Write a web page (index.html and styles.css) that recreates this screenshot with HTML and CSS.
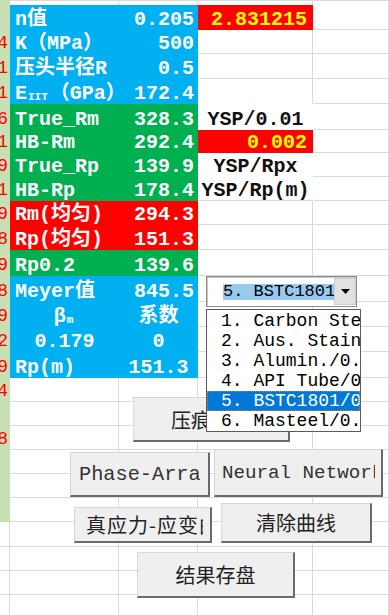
FILE: index.html
```html
<!DOCTYPE html>
<html lang="zh">

<head>
    <meta charset="UTF-8">
    <title>压痕计算</title>
    <meta name="viewport" content="width=device-width, initial-scale=1.0">
    <link rel="stylesheet" href="styles.css">
</head>

<body>

    <div class="sheet">
        <div class="grid">
            <!-- row 0 (cut off at the top) -->
            <div class="c a"></div><div class="c t"></div><div class="c t"></div><div class="c t"></div><div class="c t"></div>

            <!-- input block -->
            <div class="c a"></div>
            <div class="c bl">n值</div>
            <div class="c bl num">0.205</div>
            <div class="c rd num yel">2.831215</div>
            <div class="c"></div>

            <div class="c a"><span>0.284</span></div>
            <div class="c bl">K（MPa）</div>
            <div class="c bl num">500</div>
            <div class="c"></div>
            <div class="c"></div>

            <div class="c a"><span>0.651</span></div>
            <div class="c bl">压头半径R</div>
            <div class="c bl num">0.5</div>
            <div class="c"></div>
            <div class="c"></div>

            <div class="c a"><span>0.311</span></div>
            <div class="c bl">E<span class="s">IIT</span>（GPa）</div>
            <div class="c bl num">172.4</div>
            <div class="c nb"></div>
            <div class="c"></div>

            <!-- results -->
            <div class="c a"><span>0.146</span></div>
            <div class="c gr">True_Rm</div>
            <div class="c gr num">328.3</div>
            <div class="c dk nr nb">YSP/0.01</div>
            <div class="c"></div>

            <div class="c a"><span>0.271</span></div>
            <div class="c gr">HB-Rm</div>
            <div class="c gr num">292.4</div>
            <div class="c rd num yel">0.002</div>
            <div class="c"></div>

            <div class="c a"><span>0.539</span></div>
            <div class="c gr">True_Rp</div>
            <div class="c gr num">139.9</div>
            <div class="c dk nr nb">YSP/Rpx</div>
            <div class="c"></div>

            <div class="c a"><span>0.421</span></div>
            <div class="c gr">HB-Rp</div>
            <div class="c gr num">178.4</div>
            <div class="c dk nr">YSP/Rp(m)</div>
            <div class="c"></div>

            <div class="c a"><span>0.779</span></div>
            <div class="c rd">Rm(均匀)</div>
            <div class="c rd num">294.3</div>
            <div class="c"></div>
            <div class="c"></div>

            <div class="c a"><span>0.348</span></div>
            <div class="c rd">Rp(均匀)</div>
            <div class="c rd num">151.3</div>
            <div class="c"></div>
            <div class="c"></div>

            <div class="c a"><span>0.519</span></div>
            <div class="c gr">Rp0.2</div>
            <div class="c gr num">139.6</div>
            <div class="c"></div>
            <div class="c"></div>

            <div class="c a"><span>0.368</span></div>
            <div class="c bl">Meyer值</div>
            <div class="c bl num">845.5</div>
            <div class="c"></div>
            <div class="c"></div>

            <div class="c a"><span>0.129</span></div>
            <div class="c bl mid">β<span class="s">m</span></div>
            <div class="c bl mid">系数</div>
            <div class="c"></div>
            <div class="c"></div>

            <div class="c a"><span>0.412</span></div>
            <div class="c bl mid">0.179</div>
            <div class="c bl mid">0</div>
            <div class="c"></div>
            <div class="c"></div>

            <div class="c a"><span>0.659</span></div>
            <div class="c bl">Rp(m)</div>
            <div class="c bl mid">151.3</div>
            <div class="c"></div>
            <div class="c"></div>

            <!-- empty rows -->
            <div class="c a"><span>0.274</span></div><div class="c"></div><div class="c"></div><div class="c"></div><div class="c"></div>
            <div class="c a"></div><div class="c"></div><div class="c"></div><div class="c"></div><div class="c"></div>
            <div class="c a"><span>0.608</span></div><div class="c"></div><div class="c"></div><div class="c"></div><div class="c"></div>
            <div class="c a"></div><div class="c"></div><div class="c"></div><div class="c"></div><div class="c"></div>
            <div class="c a"></div><div class="c"></div><div class="c"></div><div class="c"></div><div class="c"></div>
            <div class="c a"></div><div class="c"></div><div class="c"></div><div class="c"></div><div class="c"></div>
            <div class="c"></div><div class="c"></div><div class="c"></div><div class="c"></div><div class="c"></div>
            <div class="c"></div><div class="c"></div><div class="c"></div><div class="c"></div><div class="c"></div>
            <div class="c"></div><div class="c"></div><div class="c"></div><div class="c"></div><div class="c"></div>
            <div class="c"></div><div class="c"></div><div class="c"></div><div class="c"></div><div class="c"></div>
        </div>

        <!-- controls floating on the sheet -->
        <button class="btn btn-yh">压痕曲线</button>
        <button class="btn en btn-phase"><span class="clip">Phase-Array</span></button>
        <button class="btn en btn-neural"><span class="clip">Neural Network</span></button>
        <button class="btn left btn-zyl"><span class="clip">真应力-应变曲线</span></button>
        <button class="btn btn-clear">清除曲线</button>
        <button class="btn btn-save">结果存盘</button>

        <div class="combo">
            <span class="combo-text">5. BSTC1801/0.2</span>
            <div class="arrow">
                <svg width="9" height="5" viewBox="0 0 9 5"><polygon points="0,0 9,0 4.5,5" fill="#000"/></svg>
            </div>
        </div>

        <ul class="list">
            <li>1. Carbon Steel/0.2</li>
            <li>2. Aus. Stainless/0.2</li>
            <li>3. Alumin./0.2</li>
            <li>4. API Tube/0.2</li>
            <li class="sel">5. BSTC1801/0.2</li>
            <li>6. Masteel/0.2</li>
        </ul>
    </div>

</body>
</html>
```

FILE: styles.css
```css
* {
    box-sizing: border-box;
    margin: 0;
    padding: 0;
}

html, body {
    width: 100%;
    height: 100%;
    overflow: hidden;
    background: #fff;
}

.sheet {
    position: relative;
    width: 389px;
    height: 615px;
    overflow: hidden;
    font-family: "Liberation Mono", "Noto Sans CJK SC", monospace;
}

.grid {
    display: grid;
    grid-template-columns: 10px 109px 79px 115px 76px;
    grid-template-rows: 5px 25px 24px 25px 25px 26px 23px 24px 24px 24px 25px 26px 26px 25px 25px 26px 24px 24px 24px 24px 24px 24px 25px 24px 24px 24px;
}

/* a spreadsheet cell */
.c {
    display: flex;
    align-items: flex-end;
    padding: 0 4px 0 5px;
    border-right: 1px solid #dadada;
    border-bottom: 1px solid #dadada;
    font-size: 20px;
    font-weight: bold;
    line-height: 18px;
    white-space: nowrap;
    overflow: hidden;
    color: #fff;
}

.t {
    border-top: 1px solid #dadada;
    border-bottom: none;
}

.a {
    background: #c6e0b4;
    border-color: #c6e0b4;
    justify-content: flex-end;
    padding: 0 1px 1px 0;
    font-size: 18px;
    font-weight: normal;
    color: #ff0000;
}

.bl {
    background: #00b0f0;
    border-color: #00b0f0;
}

.gr {
    background: #00b050;
    border-color: #00b050;
}

.rd {
    background: #ff0000;
    border-color: #ff0000;
}

.num {
    justify-content: flex-end;
    padding-right: 3px;
}

.mid {
    justify-content: center;
}

.yel {
    color: #ffff00;
    padding-right: 5px;
}

.dk {
    justify-content: center;
    color: #111;
}

.nr {
    border-right-color: transparent;
}

.nb {
    border-bottom-color: transparent;
}

/* small subscript inside a cell label */
.s {
    font-size: 11px;
    line-height: 11px;
    align-self: flex-end;
    margin: 0 2px 0 1px;
}

/* buttons */
.btn {
    position: absolute;
    background: #efefef;
    border-style: solid;
    border-width: 1px 2px 2px 1px;
    border-color: #d6d6d6 #6a6a6a #6a6a6a #d6d6d6;
    font-family: "Noto Sans CJK SC", sans-serif;
    font-size: 20px;
    color: #222;
    white-space: nowrap;
    overflow: hidden;
}

.btn .clip {
    display: block;
    overflow: hidden;
    text-align: left;
}

.btn.en {
    font-family: "Liberation Mono", monospace;
    font-size: 20.3px;
    color: #333;
    padding: 0 8px 0 8px;
}

.btn.en.btn-neural {
    font-size: 19.2px;
    padding: 0 6px 0 7px;
}

.btn.left {
    letter-spacing: 1px;
    padding: 0 7px 0 11px;
}

.btn-yh { left: 133px; top: 397px; width: 157px; height: 45px; }
.btn-phase { left: 70px; top: 452px; width: 140px; height: 45px; }
.btn-neural { left: 214px; top: 449px; width: 169px; height: 48px; }
.btn-zyl { left: 74px; top: 507px; width: 138px; height: 36px; }
.btn-clear { left: 221px; top: 503px; width: 151px; height: 40px; }
.btn-save { left: 137px; top: 552px; width: 158px; height: 46px; }

/* material combobox */
.combo {
    position: absolute;
    left: 206px;
    top: 276px;
    width: 151px;
    height: 31px;
    display: flex;
    align-items: center;
    padding-left: 16px;
    background: #fff;
    border: 1px solid #8a8a8a;
    box-shadow: inset 1px 1px 0 #c9c9c9;
    font-size: 17px;
    white-space: nowrap;
    overflow: hidden;
}

.combo-text {
    background: #99c9ef;
    line-height: 16px;
    color: #000;
}

.arrow {
    position: absolute;
    top: 1px;
    right: 0;
    width: 22px;
    height: 27px;
    background: #e1e1e1;
    border: 1px solid #cfcfcf;
    display: flex;
    align-items: center;
    justify-content: center;
}

.list {
    position: absolute;
    left: 206px;
    top: 309px;
    width: 155px;
    height: 123px;
    list-style: none;
    padding-top: 1px;
    background: #fff;
    border: 1px solid #5a5a5a;
    font-size: 18px;
    color: #000;
}

.list li {
    height: 20px;
    line-height: 20px;
    padding-left: 14px;
    white-space: nowrap;
    overflow: hidden;
}

.list .sel {
    background: #0078d7;
    color: #fff;
    outline: 1px dotted #c8842a;
    outline-offset: -1px;
}
```
